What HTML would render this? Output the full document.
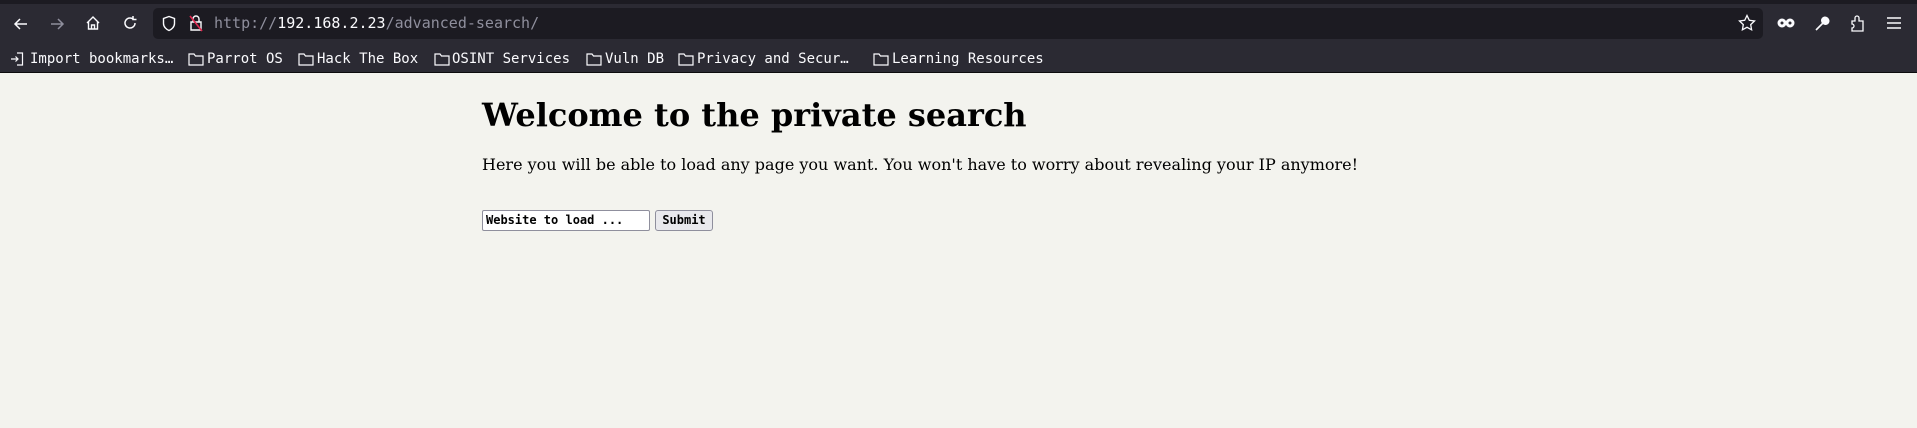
<!DOCTYPE html>
<html><head><meta charset="utf-8"><style>
*{margin:0;padding:0;box-sizing:border-box}
body{width:1917px;height:428px;overflow:hidden;background:#f3f3ee;position:relative;font-family:"DejaVu Serif","Liberation Serif",serif}
#top{position:absolute;left:0;top:0;width:1917px;height:4px;background:#1c1b22}
#nav{position:absolute;left:0;top:4px;width:1917px;height:69px;background:#2b2a33;border-bottom:1px solid #0c0c0d}
#url{position:absolute;left:153px;top:8px;width:1610px;height:31px;background:#1c1b22;border-radius:5px}
.m{position:absolute;font-family:"DejaVu Sans Mono","Liberation Mono",monospace;color:#fbfbfe;white-space:nowrap}
.bm{font-size:14px;top:51px}
svg{position:absolute}
h1{position:absolute;left:482px;top:96px;font-size:32px;font-weight:bold;color:#000;white-space:nowrap}
p{position:absolute;left:482px;top:155px;font-size:16px;color:#000;white-space:nowrap}
#in{position:absolute;left:482px;top:210px;width:168px;height:21px;background:#fff;border:1px solid #8f8f9d;border-radius:2px;font-family:"DejaVu Sans Mono",monospace;font-size:12px;font-weight:bold;padding:2px 3px;color:#000}
#sb{position:absolute;left:655px;top:210px;width:58px;height:21px;background:#e9e9ed;border:1px solid #8f8f9d;border-radius:3px;font-family:"DejaVu Sans Mono",monospace;font-size:12px;font-weight:bold;text-align:center;line-height:19px;color:#000}
</style></head><body>
<div id="top"></div>
<div id="nav"></div>
<div id="url"></div>
<svg style="left:13px;top:16px" width="16" height="16" viewBox="0 0 16 16" fill="none" stroke="#fbfbfe" stroke-width="1.5"><path d="M14 8H2M7 3L2 8l5 5"/></svg>
<svg style="left:49px;top:16px" width="16" height="16" viewBox="0 0 16 16" fill="none" stroke="#8f8f9d" stroke-width="1.5"><path d="M2 8h12M9 3l5 5-5 5"/></svg>
<svg style="left:85px;top:15px" width="16" height="16" viewBox="0 0 16 16" fill="none" stroke="#fbfbfe" stroke-width="1.4"><path d="M2 8L8 2l6 6M3.5 6.5V14h9V6.5M6.5 14V10h3v4"/></svg>
<svg style="left:122px;top:15px" width="16" height="16" viewBox="0 0 16 16" fill="none" stroke="#fbfbfe" stroke-width="1.5"><path d="M13 8a5 5 0 1 1-2-4M11 1v3.5h3.5"/></svg>
<svg style="left:161px;top:15px" width="16" height="17" viewBox="0 0 16 17" fill="none" stroke="#fbfbfe" stroke-width="1.4"><path d="M8 1.5L2.5 3.5v5c0 3.5 3 6 5.5 7 2.5-1 5.5-3.5 5.5-7v-5z"/></svg>
<svg style="left:188px;top:14px" width="16" height="18" viewBox="0 0 16 18" fill="none" stroke-width="1.4"><path stroke="#fbfbfe" d="M5 8V5a3 3 0 0 1 6 0v3M3 8h10v8H3z"/><path stroke="#e22850" stroke-width="1.6" d="M2 2l12 15"/></svg>
<div class="m" style="left:214px;top:14px;font-size:15px;color:#8f8f9d">http://<span style="color:#fbfbfe">192.168.2.23</span>/advanced-search/</div>
<svg style="left:1738px;top:14px" width="18" height="18" viewBox="0 0 18 18" fill="none" stroke="#fbfbfe" stroke-width="1.3"><path d="M9 1.5l2.3 4.8 5.2.7-3.8 3.6.9 5.2L9 13.3l-4.6 2.5.9-5.2L1.5 7l5.2-.7z"/></svg>
<svg style="left:1777px;top:17px" width="18" height="12" viewBox="0 0 18 12" fill="none" stroke="#fbfbfe" stroke-width="3"><circle cx="5" cy="6" r="3"/><circle cx="13" cy="6" r="3"/></svg>
<svg style="left:1814px;top:14px" width="16" height="18" viewBox="0 0 16 18" fill="none" stroke="#fbfbfe" stroke-width="1.6"><path d="M2 16l7-7"/><path d="M9 9a3 3 0 0 1 4-5l-2 2 1 1 2-2a3 3 0 0 1-5 4" fill="#fbfbfe"/></svg>
<svg style="left:1850px;top:14px" width="16" height="18" viewBox="0 0 16 18" fill="none" stroke="#fbfbfe" stroke-width="1.3"><path d="M2 7h3V4a2 2 0 0 1 4 0v3h4v10H2v-3a2 2 0 0 0 0-4z"/></svg>
<svg style="left:1887px;top:17px" width="14" height="12" viewBox="0 0 14 12" fill="none" stroke="#fbfbfe" stroke-width="1.4"><path d="M0 1h14M0 6h14M0 11h14"/></svg>
<svg style="left:10px;top:52px" width="14" height="14" viewBox="0 0 14 14" fill="none" stroke="#fbfbfe" stroke-width="1.2"><path d="M7 1h5.5v12H7M1 7h7M5.5 4.5L8 7l-2.5 2.5"/></svg>
<div class="m bm" style="left:30px">Import bookmarks…</div>
<svg style="left:188px;top:52px" width="16" height="14" viewBox="0 0 16 14" fill="none" stroke="#fbfbfe" stroke-width="1.2"><path d="M1 2h5l1.5 2H15v9H1z"/></svg>
<div class="m bm" style="left:207px">Parrot OS</div>
<svg style="left:298px;top:52px" width="16" height="14" viewBox="0 0 16 14" fill="none" stroke="#fbfbfe" stroke-width="1.2"><path d="M1 2h5l1.5 2H15v9H1z"/></svg>
<div class="m bm" style="left:317px">Hack The Box</div>
<svg style="left:434px;top:52px" width="16" height="14" viewBox="0 0 16 14" fill="none" stroke="#fbfbfe" stroke-width="1.2"><path d="M1 2h5l1.5 2H15v9H1z"/></svg>
<div class="m bm" style="left:452px">OSINT Services</div>
<svg style="left:586px;top:52px" width="16" height="14" viewBox="0 0 16 14" fill="none" stroke="#fbfbfe" stroke-width="1.2"><path d="M1 2h5l1.5 2H15v9H1z"/></svg>
<div class="m bm" style="left:605px">Vuln DB</div>
<svg style="left:678px;top:52px" width="16" height="14" viewBox="0 0 16 14" fill="none" stroke="#fbfbfe" stroke-width="1.2"><path d="M1 2h5l1.5 2H15v9H1z"/></svg>
<div class="m bm" style="left:697px">Privacy and Secur…</div>
<svg style="left:873px;top:52px" width="16" height="14" viewBox="0 0 16 14" fill="none" stroke="#fbfbfe" stroke-width="1.2"><path d="M1 2h5l1.5 2H15v9H1z"/></svg>
<div class="m bm" style="left:892px">Learning Resources</div>
<h1>Welcome to the private search</h1>
<p>Here you will be able to load any page you want. You won't have to worry about revealing your IP anymore!</p>
<div id="in">Website to load ...</div>
<div id="sb">Submit</div>
</body></html>
